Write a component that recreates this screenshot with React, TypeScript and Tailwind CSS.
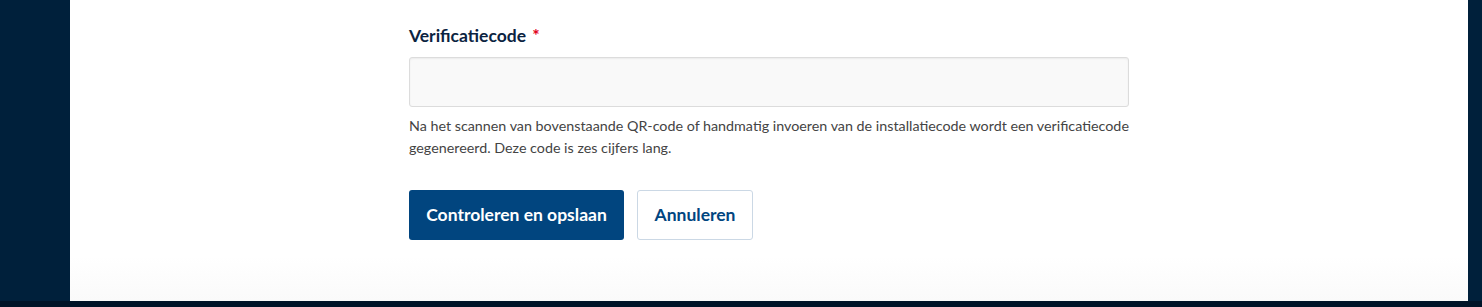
export default function App() {
  return (
    <div className="flex h-[307px] w-full flex-col bg-[#00203b]" style={{ fontFamily: 'Lato, "Noto Sans", sans-serif' }}>
      <div className="flex flex-1">
        <div className="w-[70px] shrink-0" />
        <main className="flex-1 bg-gradient-to-b from-white from-85% to-[#fafafa] pl-[339px] pt-[23px]">
          <form className="w-[720px]" onSubmit={(e) => e.preventDefault()}>
            <label htmlFor="code" className="block text-[17.5px] font-bold leading-[26px] text-[#0b2341]">
              Verificatiecode <span className="ml-0.5 text-[#e1001a]">*</span>
            </label>
            <input
              id="code"
              type="text"
              className="mt-[8px] block h-[50px] w-[720px] rounded-[3px] border border-[#dcdcdc] bg-[#f9f9f9] px-3 shadow-[inset_0_1px_2px_rgba(0,0,0,0.06)] outline-none"
            />
            <p className="mt-[8px] text-[14.3px] leading-[22px] text-[#444]">
              Na het scannen van bovenstaande QR-code of handmatig invoeren van de installatiecode wordt een verificatiecode gegenereerd. Deze code is zes cijfers lang.
            </p>
            <div className="mt-[31px] flex gap-[13px]">
              <button
                type="submit"
                className="h-[50px] w-[215px] rounded-[3px] bg-[#01457f] text-[17.5px] font-bold text-white"
              >
                Controleren en opslaan
              </button>
              <button
                type="button"
                className="h-[50px] w-[116px] rounded-[3px] border border-[#cbd8e5] bg-white text-[17.5px] font-bold text-[#01457f]"
              >
                Annuleren
              </button>
            </div>
          </form>
        </main>
        <div className="w-[14px] shrink-0" />
      </div>
      <div className="h-[6px] shrink-0 bg-[#001428]" />
    </div>
  );
}
